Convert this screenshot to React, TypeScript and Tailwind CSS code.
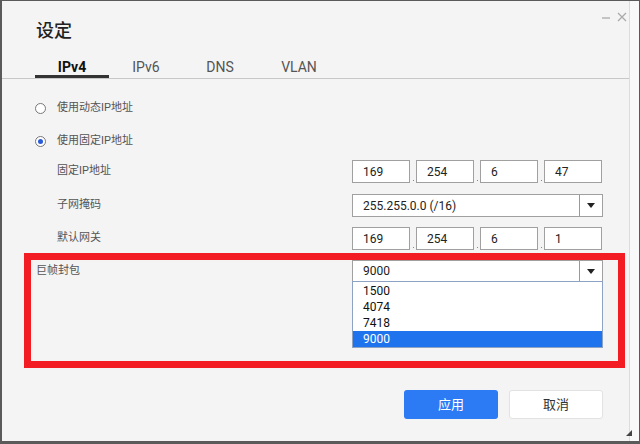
import { useState } from "react";

const tabs = ["IPv4", "IPv6", "DNS", "VLAN"];
const mtuOptions = ["1500", "4074", "7418", "9000"];

function Radio({ checked }: { checked?: boolean }) {
  return (
    <span className="w-[11px] h-[11px] rounded-full border border-[#777] bg-white flex items-center justify-center shrink-0">
      {checked && <span className="w-[5px] h-[5px] rounded-full bg-[#2a5bd7]" />}
    </span>
  );
}

function Arrow() {
  return (
    <span className="w-[23px] h-full border-l border-[#999] flex items-center justify-center">
      <svg width="8" height="5" viewBox="0 0 8 5">
        <path d="M0 0h8L4 5z" fill="#222" />
      </svg>
    </span>
  );
}

function IpInput({ parts }: { parts: string[] }) {
  return (
    <div className="flex w-[251px] h-[23px]">
      {parts.map((p, i) => (
        <div key={i} className="flex">
          {i > 0 && (
            <div className="w-[6px] flex items-end justify-center pb-[2px]">
              <span className="w-[1px] h-[1px] bg-[#888]" />
            </div>
          )}
          <div className="w-[58px] h-[23px] border border-[#a0a0a0] bg-white text-[12px] text-[#222] pl-[10px] flex items-center">
            {p}
          </div>
        </div>
      ))}
    </div>
  );
}

function Row({ label, children }: { label: string; children: React.ReactNode }) {
  return (
    <div className="flex items-center h-[23px]">
      <div className="w-[350px] pl-[55px] text-[11px] text-[#555]">{label}</div>
      {children}
    </div>
  );
}

export default function App() {
  const [tab] = useState(0);
  return (
    <div className="w-[640px] h-[444px] flex bg-[#f4f4f4] border-l-2 border-t border-r border-b-[3px] border-[#5a5a5a] font-['Roboto','Noto_Sans_CJK_SC',sans-serif] overflow-hidden">
      <div className="relative w-[627px] h-full flex flex-col">
        <div className="absolute top-[11px] right-[2px] flex items-center gap-[6px]">
          <svg width="9" height="9" viewBox="0 0 9 9">
            <path d="M0 5h8" stroke="#aaa" strokeWidth="1.3" />
          </svg>
          <svg width="10" height="10" viewBox="0 0 10 10">
            <path d="M1 1l8 8M9 1l-8 8" stroke="#aaa" strokeWidth="1.3" />
          </svg>
        </div>

        <div className="pt-[18px] pl-[34px] text-[18px] leading-[24px] text-[#222] font-medium">设定</div>

        <div className="mt-[8px] flex pl-[33px] border-b border-[#c8c8c8]">
          {tabs.map((t, i) => (
            <div
              key={t}
              className={
                i === tab
                  ? "w-[74px] pt-[8px] leading-[16px] text-center text-[14px] font-bold text-[#111] border-b-[3px] border-[#333]"
                  : i === 3
                    ? "w-[74px] ml-[5px] pt-[8px] leading-[16px] text-center text-[14px] text-[#555] border-b-[3px] border-transparent"
                    : "w-[74px] pt-[8px] leading-[16px] text-center text-[14px] text-[#555] border-b-[3px] border-transparent"
              }
            >
              {t}
            </div>
          ))}
        </div>

        <div className="flex flex-col">
          <div className="mt-[18px] h-[22px] pl-[33px] flex items-center gap-[11px] text-[11px] text-[#555]">
            <Radio />
            使用动态IP地址
          </div>
          <div className="mt-[11px] h-[22px] pl-[33px] flex items-center gap-[11px] text-[11px] text-[#555]">
            <Radio checked />
            使用固定IP地址
          </div>

          <div className="mt-[8px]">
            <Row label="固定IP地址">
              <IpInput parts={["169", "254", "6", "47"]} />
            </Row>
          </div>
          <div className="mt-[11px]">
            <Row label="子网掩码">
              <div className="w-[251px] h-[23px] border border-[#a0a0a0] bg-white flex">
                <span className="flex-1 pl-[10px] flex items-center text-[12px] text-[#222]">255.255.0.0 (/16)</span>
                <Arrow />
              </div>
            </Row>
          </div>
          <div className="mt-[10px]">
            <Row label="默认网关">
              <IpInput parts={["169", "254", "6", "1"]} />
            </Row>
          </div>

          <div className="mt-[3px] ml-[22px] w-[601px] h-[115px] border-[7px] border-[#f21c22]">
            <div className="pl-[5px] flex items-center h-[22px]">
              <div className="w-[316px] text-[11px] text-[#555]">巨帧封包</div>
              <div className="relative w-[251px] h-[22px] border border-[#a0a0a0] bg-white flex">
                <span className="flex-1 pl-[10px] flex items-center text-[12px] text-[#222]">9000</span>
                <Arrow />
                <div className="absolute left-[-1px] right-[-1px] top-full border border-[#8ea3c4] bg-white pt-[1px]">
                  {mtuOptions.map((o) => (
                    <div
                      key={o}
                      className={
                        o === "9000"
                          ? "h-[16px] leading-[16px] pl-[10px] text-[12px] text-white bg-[#1f74ee]"
                          : "h-[16px] leading-[16px] pl-[10px] text-[12px] text-[#111]"
                      }
                    >
                      {o}
                    </div>
                  ))}
                </div>
              </div>
            </div>
          </div>

          <div className="mt-[22px] flex justify-end gap-[11px] pr-[26px]">
            <button className="w-[94px] h-[29px] rounded-[3px] bg-[#2d7bf4] text-white text-[13px]">应用</button>
            <button className="w-[94px] h-[29px] rounded-[3px] bg-white border border-[#e2e2e2] text-[#333] text-[13px]">取消</button>
          </div>
        </div>

        <svg className="absolute right-[-3px] bottom-[5px]" width="6" height="6" viewBox="0 0 6 6">
          <path d="M6 0v6H0z" fill="#444" />
        </svg>
      </div>
      <div className="flex-1 border-l border-[#dcdcdc] bg-[#f9f9f9]" />
    </div>
  );
}
